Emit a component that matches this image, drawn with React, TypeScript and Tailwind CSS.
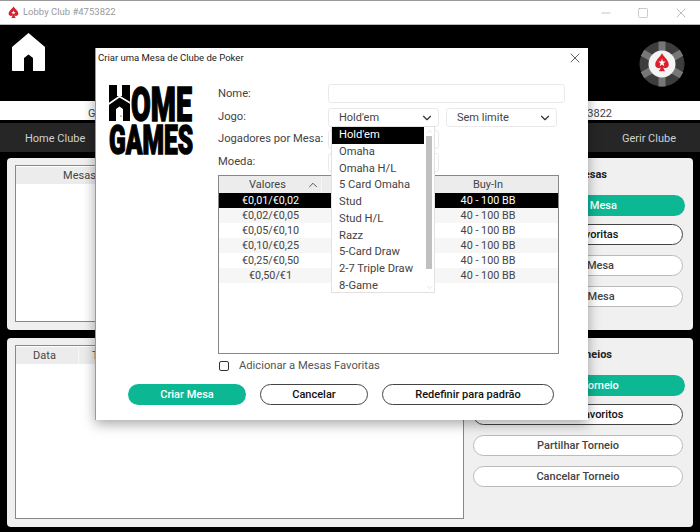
import { Minus, Square, X, ChevronDown, ChevronUp } from "lucide-react"

const games = ["Hold'em", "Omaha", "Omaha H/L", "5 Card Omaha", "Stud", "Stud H/L", "Razz", "5-Card Draw", "2-7 Triple Draw", "8-Game"]
const stakes = ["€0,01/€0,02", "€0,02/€0,05", "€0,05/€0,10", "€0,10/€0,25", "€0,25/€0,50", "€0,50/€1"]

function Spade({ className }: { className?: string }) {
  return (
    <svg viewBox="0 0 24 24" className={className}>
      <path fill="#d9202c" d="M12 1C9 6 3 9 3 14.500C3 18 7.500 19.500 10.500 17.500L8 22H16L13.500 17.500C16.500 19.500 21 18 21 14.500C21 9 15 6 12 1Z" />
      <path fill="#fff" d="M12 8L13 11H16L13.600 12.800L14.500 15.800L12 14L9.500 15.800L10.400 12.800L8 11H11Z" />
    </svg>
  )
}

function Chip() {
  return (
    <svg viewBox="0 0 46 46" className="w-[46px] h-[46px]">
      <circle cx="23" cy="23" r="22.500" fill="#3d3d3d" />
      {[0, 60, 120, 180, 240, 300].map((a) => (
        <rect key={a} x="19.500" y="0.500" width="7" height="10" fill="#777" transform={`rotate(${a} 23 23)`} />
      ))}
      <circle cx="23" cy="23" r="13.500" fill="#f4f4f4" />
      <g transform="translate(14 11.500) scale(0.75 0.85)">
        <path fill="#d9202c" d="M12 1C9 6 3 9 3 14.500C3 18 7.500 19.500 10.500 17.500L8 22H16L13.500 17.500C16.500 19.500 21 18 21 14.500C21 9 15 6 12 1Z" />
        <path fill="#fff" d="M12 7L13.200 10.500H17L14 12.700L15.100 16.200L12 14.100L8.900 16.200L10 12.700L7 10.500H10.800Z" />
      </g>
    </svg>
  )
}

function Logo() {
  return (
    <svg viewBox="0 0 85 72" className="w-[85px] h-[72px] overflow-visible">
      <path fill="#000" d="M0 1H8V12H13V1H21V37H14V25L10.500 22.500L7 25V37H0Z" />
      <path fill="none" stroke="#fff" strokeWidth="1.600" d="M-1 20.500L10.500 12.500L23 20" />
      <circle cx="12" cy="32" r="0.600" fill="#000" />
      <text x="22" y="36.500" textLength="61" lengthAdjust="spacingAndGlyphs" fontWeight="900" fontSize="49" stroke="#000" strokeWidth="1.500" className="[font-family:Roboto,sans-serif]">OME</text>
      <text x="0" y="70" textLength="84" lengthAdjust="spacingAndGlyphs" fontWeight="900" fontSize="41" stroke="#000" strokeWidth="1.500" className="[font-family:Roboto,sans-serif]">GAMES</text>
    </svg>
  )
}

function Pill({ children, variant, className = "" }: { children: string; variant: "green" | "dark" | "light"; className?: string }) {
  const styles = {
    green: "bg-[#0bb893] text-white",
    dark: "bg-white border border-[#444] text-[#111]",
    light: "bg-white border border-[#bbb] text-[#444]",
  }
  return (
    <div className={`h-[21px] rounded-full flex items-center justify-center pt-[1px] text-[11px] font-medium ${styles[variant]} ${className}`}>
      {children}
    </div>
  )
}

function Select({ label, className }: { label?: string; className: string }) {
  return (
    <div className={`h-[19px] shrink-0 bg-white border border-[#eaeaea] rounded-[3px] flex items-center justify-between pl-[10px] pr-[4px] text-[11px] text-[#444] ${className}`}>
      <span className="pt-[1px]">{label}</span>
      {label && <ChevronDown size={14} strokeWidth={2} className="text-[#333]" />}
    </div>
  )
}

function LobbyPanel({ height, columns, heading, headingPad, green, dark, lightA, lightB }: {
  height: string
  columns: { name: string; className: string }[]
  heading: string
  headingPad: string
  green: string
  dark: string
  lightA: string
  lightB: string
}) {
  return (
    <div className={`bg-[#f0f0f0] rounded-[4px] flex pl-[8px] pt-[7px] pb-[8px] ${height}`}>
      <div className="w-[449px] bg-white border border-[#888] pt-[1px]">
        <div className="flex h-[17px] bg-[#ececec] text-[11px] leading-[16px] pt-[1px] text-[#444]">
          {columns.map((c) => (
            <div key={c.name} className={`border-r border-[#f8f8f8] ${c.className}`}>{c.name}</div>
          ))}
        </div>
      </div>
      <div className="w-[210px] ml-[9px] pt-[3px] flex flex-col">
        <div className={`h-[14px] text-right text-[11px] font-bold text-[#222] leading-[14px] ${headingPad}`}>{heading}</div>
        <div className="flex flex-col gap-[10px] mt-[13px]">
          <Pill variant="green" className="-mx-[2px]">{green}</Pill>
          <div className="-mt-[2px]"><Pill variant="dark">{dark}</Pill></div>
          <Pill variant="light">{lightA}</Pill>
          <Pill variant="light">{lightB}</Pill>
        </div>
      </div>
    </div>
  )
}

export default function App() {
  return (
    <div className="relative w-[700px] h-[532px] overflow-hidden bg-black text-[11.200px] [font-family:Roboto,sans-serif]">
      <div className="h-[25px] bg-white border-t border-[#999] border-b border-b-[#bbb] flex items-center pl-[7px] pr-[11px]">
        <Spade className="w-[13px] h-[13px]" />
        <span className="ml-[3px] text-[9.500px] text-[#999]">Lobby Club #4753822</span>
        <div className="ml-auto flex items-center gap-[24px] text-[#999]">
          <Minus size={14} strokeWidth={1} />
          <Square size={12} strokeWidth={1} />
          <X size={16} strokeWidth={1} />
        </div>
      </div>

      <div className="h-[76px] flex items-start justify-between pl-[12px] pr-[15px]">
        <svg viewBox="0 0 33 38" className="w-[33px] h-[38px] mt-[8px]">
          <path fill="#fff" d="M16.500 0L33 14V37C33 37.600 32.600 38 32 38H21V25L16.500 21.500L12 25V38H1C0.400 38 0 37.600 0 37V14Z" />
        </svg>
        <div className="mt-[16px]"><Chip /></div>
      </div>

      <div className="h-[19px] bg-white flex justify-between px-[88px] pt-[5px] text-[11px] text-[#444] leading-[15px]">
        <span>G</span>
        <span>3822</span>
      </div>

      <div className="h-[29px] mt-[3px] pt-[3px] bg-[#262626] flex items-center justify-between pl-[25px] pr-[24px] text-[11px] text-[#d0d0d0]">
        <span>Home Clube</span>
        <span>Gerir Clube</span>
      </div>

      <div className="px-[7px] pt-[6px] flex flex-col gap-[8px]">
        <LobbyPanel
          height="h-[172px]"
          columns={[{ name: "Mesas", className: "w-[128px] text-center" }]}
          heading="Mesas"
          headingPad="pr-[76px]"
          green="Criar uma Mesa"
          dark="Mesas Favoritas"
          lightA="Partilhar Mesa"
          lightB="Cancelar Mesa"
        />
        <LobbyPanel
          height="h-[189px]"
          columns={[
            { name: "Data", className: "w-[63px] text-center pr-[5px]" },
            { name: "T", className: "w-[40px] pl-[13px]" },
          ]}
          heading="Torneios"
          headingPad="pr-[71px]"
          green="Criar um Torneio"
          dark="Torneios Favoritos"
          lightA="Partilhar Torneio"
          lightB="Cancelar Torneio"
        />
      </div>

      <div className="absolute left-[95px] top-[48px] w-[493px] h-[372px] bg-white border-l border-[#999] shadow-[0_4px_12px_rgba(0,0,0,0.35)] text-[#444]">
        <div className="flex items-center justify-between h-[20px] pl-[2px] pr-[5px] text-[9.500px] text-[#222]">
          <span>Criar uma Mesa de Clube de Poker</span>
          <X size={16} strokeWidth={1} className="text-[#111]" />
        </div>

        <div className="flex mt-[16px] pl-[13px]">
          <div className="w-[109px] shrink-0"><Logo /></div>
          <div className="w-[341px]">
            <div className="flex flex-col">
              <div className="flex items-center">
                <span className="w-[110px] shrink-0 pt-[2px]">Nome:</span>
                <Select className="w-[237px]" />
              </div>
              <div className="flex items-center mt-[5px]">
                <span className="w-[110px] shrink-0">Jogo:</span>
                <Select label="Hold'em" className="w-[111px]" />
                <Select label="Sem limite" className="w-[111px] ml-[7px]" />
              </div>
              <div className="flex items-center mt-[3px]">
                <span className="w-[110px] shrink-0 whitespace-nowrap">Jogadores por Mesa:</span>
                <Select className="w-[111px]" />
              </div>
              <div className="flex items-center mt-[4px]">
                <span className="w-[110px] shrink-0">Moeda:</span>
                <Select className="w-[111px]" />
              </div>
            </div>

            <div className="mt-[3px] h-[179px] border border-[#888]">
              <div className="flex h-[17px] bg-[#ececec] text-[11px] pt-[1px]">
                <div className="w-[103px] pl-[30px] pr-[1px] flex items-center justify-between border-r border-[#f8f8f8]">
                  <span>Valores</span>
                  <ChevronUp size={14} strokeWidth={1.500} />
                </div>
                <div className="ml-auto mr-[15px] w-[110px] text-center">Buy-In</div>
              </div>
              {stakes.map((s, i) => (
                <div key={s} className={`flex h-[15px] leading-[15px] text-[10.800px] ${i === 0 ? "bg-black text-white" : i % 2 === 1 ? "bg-[#f6f6f6]" : "bg-white"}`}>
                  <div className="w-[103px] text-center">{s}</div>
                  <div className="ml-auto mr-[15px] w-[110px] text-center">40 - 100 BB</div>
                </div>
              ))}
            </div>

            <div className="flex items-center mt-[4px]">
              <div className="w-[10px] h-[10px] ml-[1px] border border-[#333] rounded-[2px]" />
              <span className="ml-[10px] text-[#555]">Adicionar a Mesas Favoritas</span>
            </div>
          </div>
        </div>

        <div className="flex mt-[9px] pl-[32px] gap-[14px]">
          <div className="w-[118px]"><Pill variant="green">Criar Mesa</Pill></div>
          <div className="w-[108px]"><Pill variant="dark">Cancelar</Pill></div>
          <div className="w-[172px]"><Pill variant="dark">Redefinir para padrão</Pill></div>
        </div>
      </div>

      <div className="absolute left-[331px] top-[126px] w-[104px] h-[167px] bg-white border border-[#e2e2e2] flex text-[#444]">
        <div className="flex-1">
          {games.map((g, i) => (
            <div key={g} className={`h-[16.750px] leading-[16px] pl-[7px] ${i === 0 ? "bg-black text-white" : ""}`}>{g}</div>
          ))}
        </div>
        <div className="w-[10px] flex flex-col items-center bg-white">
          <ChevronUp size={9} strokeWidth={1} className="text-[#bbb]" />
          <div className="w-[6px] h-[133px] bg-[#c0c0c0]" />
          <ChevronDown size={9} strokeWidth={1} className="mt-auto text-[#bbb]" />
        </div>
      </div>
    </div>
  )
}
